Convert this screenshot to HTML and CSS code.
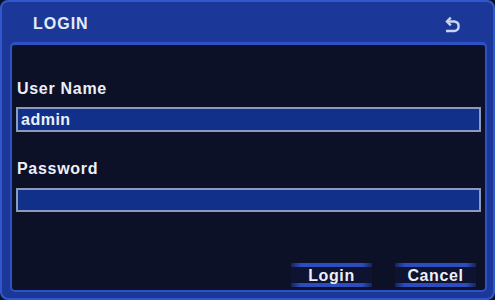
FILE: index.html
```html
<!DOCTYPE html>
<html>
<head>
<meta charset="utf-8">
<link rel="stylesheet" href="styles.css">
</head>
<body>
<div class="dialog">
  <div class="header">
    <span class="title">LOGIN</span>
    <svg class="back" width="19" height="18" viewBox="0 0 19 18">
      <path d="M4 5.5 H11.5 A4.8 4.8 0 0 1 11.5 15 H3" fill="none" stroke="#c9d4f0" stroke-width="2.4"/>
      <path d="M7.8 1.7 L4 5.5 L7.8 9.3" fill="none" stroke="#c9d4f0" stroke-width="2.4"/>
    </svg>
  </div>
  <div class="body">
    <div class="label first">User Name</div>
    <div class="field">admin</div>
    <div class="label second">Password</div>
    <div class="field pw"></div>
    <div class="buttons">
      <div class="btn">Login</div>
      <div class="btn">Cancel</div>
    </div>
  </div>
</div>
</body>
</html>
```
FILE: styles.css
```css
html, body {
  margin: 0;
  padding: 0;
  background: #0b1029;
}
body {
  font-family: "Liberation Sans", Arial, sans-serif;
  font-weight: bold;
  color: #eceff7;
}
.dialog {
  width: 495px;
  height: 300px;
  box-sizing: border-box;
  background: #1b3899;
  border: 2px solid #3058cc;
  border-radius: 8px;
  padding: 0 6px 6px 8px;
  display: flex;
  flex-direction: column;
}
.header {
  height: 40px;
  box-sizing: border-box;
  padding: 12px 25px 0 23px;
  display: flex;
  justify-content: space-between;
  align-items: flex-start;
}
.title {
  font-size: 16px;
  line-height: 20px;
  letter-spacing: 1px;
  color: #e6ebf7;
}
.back {
  margin-top: 2px;
}
.body {
  flex: 1;
  background: #0c1128;
  border: 2px solid #2c52c6;
  border-top-width: 3px;
  border-radius: 5px;
  padding: 0 4px 3px 4px;
  display: flex;
  flex-direction: column;
}
.label {
  font-size: 16px;
  line-height: 20px;
  letter-spacing: 0.7px;
  padding-left: 1px;
  margin-bottom: 8px;
}
.label.first {
  margin-top: 34px;
}
.label.second {
  margin-top: 27px;
  margin-bottom: 9px;
}
.field {
  height: 25px;
  box-sizing: border-box;
  background: #10308a;
  border: 2px solid #8b9bbf;
  font-size: 16px;
  line-height: 21px;
  padding-left: 3px;
  letter-spacing: 0.5px;
}
.field.pw {
  height: 24px;
}
.buttons {
  margin-top: auto;
  display: flex;
  justify-content: flex-end;
  gap: 23px;
  padding-right: 5px;
}
.btn {
  width: 81px;
  height: 24px;
  box-sizing: border-box;
  text-align: center;
  font-size: 16px;
  line-height: 25px;
  letter-spacing: 0.6px;
  background:
    linear-gradient(90deg, rgba(42,76,187,0.3), #2b4dbd 12%, #2b4dbd 88%, rgba(42,76,187,0.3)) top / 100% 4px no-repeat,
    linear-gradient(90deg, rgba(42,76,187,0.3), #2b4dbd 12%, #2b4dbd 88%, rgba(42,76,187,0.3)) bottom / 100% 4px no-repeat,
    #0d1330;
}
```
